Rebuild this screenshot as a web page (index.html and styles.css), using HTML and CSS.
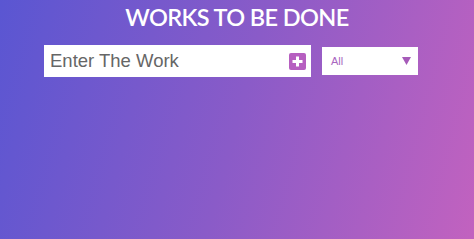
FILE: index.html
```html
<!DOCTYPE html>
<html lang="en">
<head>
<meta charset="utf-8">
<title>Works To Be Done</title>
<link rel="stylesheet" href="styles.css">
</head>
<body>
  <header class="header">
    <h1 class="title">WORKS TO BE DONE</h1>
  </header>
  <form class="todo-form" onsubmit="return false;">
    <div class="entry">
      <input class="entry-input" type="text" placeholder="Enter The Work">
      <button class="add-btn" type="submit" aria-label="Add">
        <svg width="17" height="17" viewBox="0 0 17 17">
          <rect x="0" y="0" width="17" height="17" rx="2" fill="#b65fc0"/>
          <rect x="7" y="3.5" width="3" height="10" fill="#ffffff"/>
          <rect x="3.5" y="7" width="10" height="3" fill="#ffffff"/>
        </svg>
      </button>
    </div>
    <div class="filter">
      <span class="filter-label">All</span>
      <svg class="filter-arrow" width="9" height="8" viewBox="0 0 9 8">
        <polygon points="0,0 9,0 4.5,8" fill="#a65bb9"/>
      </svg>
    </div>
  </form>
</body>
</html>
```
FILE: styles.css
```css
html, body {
  margin: 0;
  padding: 0;
  height: 100%;
}

body {
  background: linear-gradient(105deg, #5a56d2 0%, #8a5bc8 50%, #c262bf 100%);
  font-family: "Liberation Sans", Arial, sans-serif;
  overflow: hidden;
}

.header {
  padding-top: 3px;
  text-align: center;
}

.title {
  margin: 0;
  font-family: Lato, "Open Sans", sans-serif;
  font-weight: 600;
  font-size: 23.5px;
  letter-spacing: -0.6px;
  line-height: 28px;
  color: #ffffff;
}

.todo-form {
  margin-top: 14px;
  display: flex;
  justify-content: center;
  align-items: center;
  gap: 11px;
  padding-right: 12px;
}

.entry {
  width: 267px;
  height: 32px;
  box-sizing: border-box;
  background: #ffffff;
  display: flex;
  align-items: center;
  padding: 0 5px 0 6px;
}

.entry-input {
  flex: 1;
  min-width: 0;
  border: none;
  outline: none;
  background: transparent;
  padding: 0;
  font-family: "Liberation Sans", Arial, sans-serif;
  font-size: 18.5px;
  color: #555555;
}

.entry-input::placeholder {
  color: #666666;
  opacity: 1;
}

.add-btn {
  border: none;
  background: transparent;
  padding: 0;
  margin: 0;
  width: 17px;
  height: 17px;
  display: flex;
  cursor: pointer;
}

.filter {
  width: 96px;
  height: 28px;
  box-sizing: border-box;
  background: #ffffff;
  display: flex;
  align-items: center;
  justify-content: space-between;
  padding: 0 7px 0 9px;
}

.filter-label {
  font-size: 11px;
  color: #a966c0;
}

.filter-arrow {
  display: block;
}
```
